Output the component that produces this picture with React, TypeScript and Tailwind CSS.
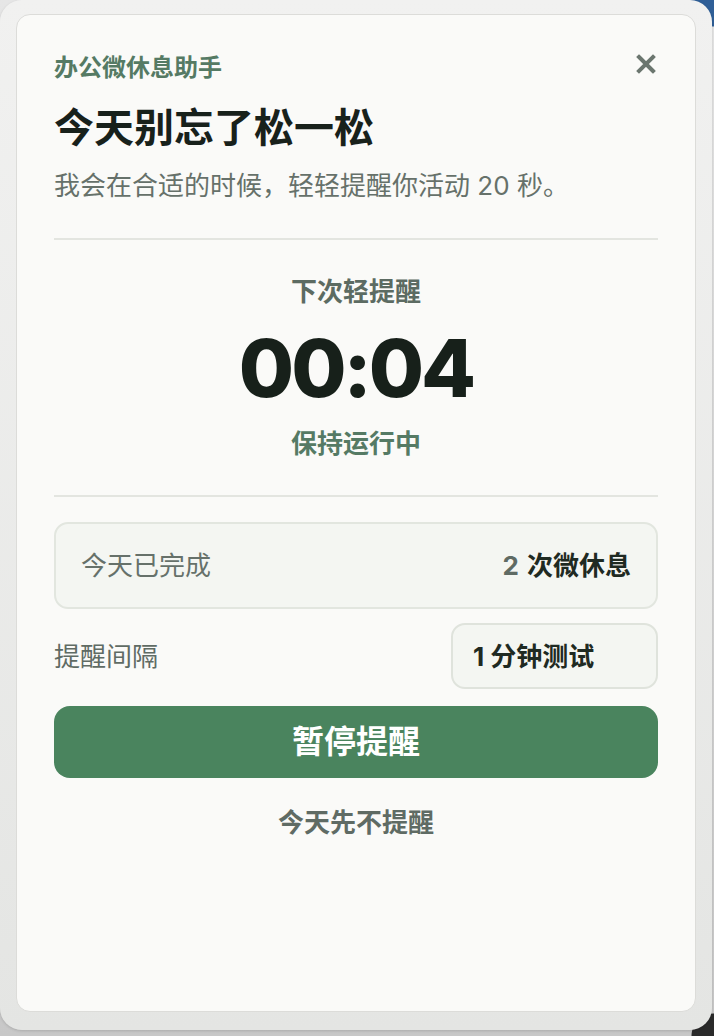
import React from "react";

const FONT = "font-['Inter','Noto_Sans_CJK_SC',sans-serif]";

export default function App() {
  return (
    <div
      className={`w-[714px] h-[1036px] overflow-hidden bg-[radial-gradient(circle_at_100%_0%,#2f5f97_0_26px,transparent_27px),radial-gradient(circle_at_100%_100%,#2a2a2a_0_22px,transparent_23px),linear-gradient(#e6e6e6,#c8c8c8)] ${FONT}`}
    >
      <div className="w-[712px] h-[1030px] rounded-[22px] bg-[linear-gradient(#f1f1f0,#e4e5e3)] p-[14px_16px_18px_16px] shadow-[0_1px_3px_rgba(0,0,0,0.15)]">
        <div className="h-[998px] rounded-[14px] border border-[#dcdcd9] bg-[#fafaf8] px-[37px] pt-[35px]">
          {/* header */}
          <div className="flex items-start justify-between">
            <div className="text-[24px] leading-[36px] font-bold text-[#557a64]">办公微休息助手</div>
            <svg
              className="mt-[4px] mr-[2px]"
              width="20"
              height="20"
              viewBox="0 0 20 20"
            >
              <path d="M3 3 L17 17 M17 3 L3 17" stroke="#6b766f" strokeWidth="4" strokeLinecap="square" />
            </svg>
          </div>
          <div className="mt-[18px] text-[40px] leading-[48px] font-bold text-[#18211b]">今天别忘了松一松</div>
          <div className="mt-[16px] text-[26px] leading-[36px] text-[#66716a]">我会在合适的时候，轻轻提醒你活动 20 秒。</div>

          <div className="mt-[34px] h-[2px] bg-[#e3e5e0]" />

          <div className="mt-[34px] text-center text-[26px] leading-[36px] font-bold text-[#5c6b62]">下次轻提醒</div>
          <div className="mt-[13px] flex justify-center">
            <span className="text-[80px] leading-[90px] font-extrabold text-[#17201a] tracking-[-3px]">00:04</span>
          </div>
          <div className="mt-[13px] text-center text-[26px] leading-[36px] font-bold text-[#557a64]">保持运行中</div>

          <div className="mt-[33px] h-[2px] bg-[#e3e5e0]" />

          <div className="mt-[25px] h-[87px] rounded-[14px] border-2 border-[#e2e6df] bg-[#f4f6f2] px-[25px] flex items-center justify-between">
            <span className="text-[26px] text-[#66716a]">今天已完成</span>
            <span className="text-[26px] font-bold">
              <span className="text-[#5f6b64] mr-[8px]">2</span>
              <span className="text-[#1f2a22]">次微休息</span>
            </span>
          </div>

          <div className="mt-[14px] flex items-center justify-between">
            <span className="text-[26px] text-[#5f6b64]">提醒间隔</span>
            <div className="w-[207px] h-[66px] rounded-[14px] border-2 border-[#dfe3dc] bg-[#f4f6f2] px-[20px] flex items-center text-[26px] font-bold text-[#1f2a22]">
              1 分钟测试
            </div>
          </div>

          <button className="mt-[17px] w-full h-[72px] rounded-[16px] bg-[#4a845e] text-white text-[32px] font-bold flex items-center justify-center">
            暂停提醒
          </button>

          <div className="mt-[27px] text-center text-[26px] leading-[36px] font-bold text-[#5f6b64]">今天先不提醒</div>
        </div>
      </div>
    </div>
  );
}
